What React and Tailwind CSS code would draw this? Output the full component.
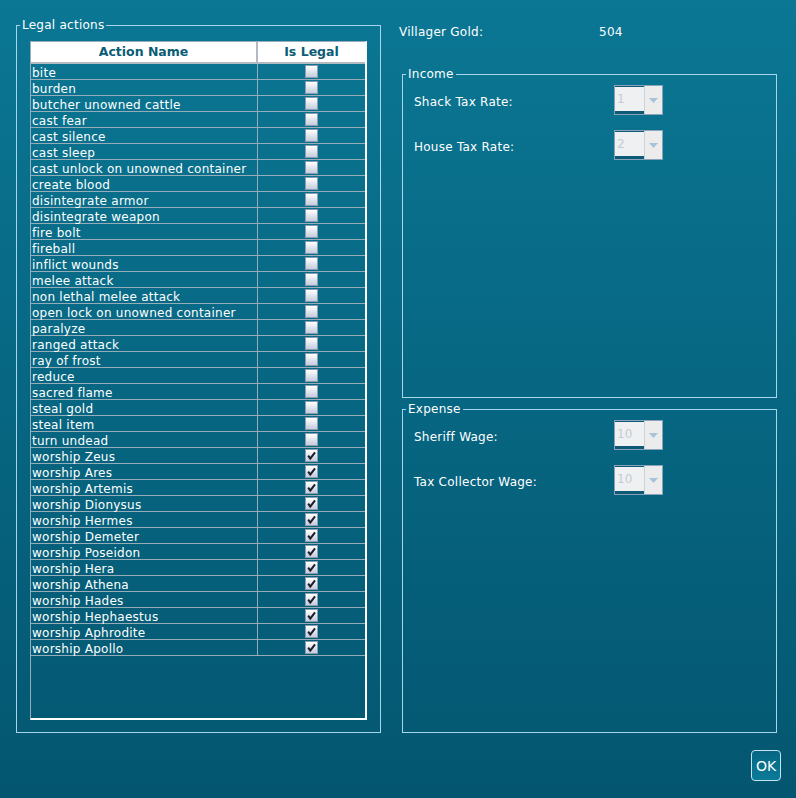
import React from "react";

const actions = [
  "bite", "burden", "butcher unowned cattle", "cast fear", "cast silence", "cast sleep",
  "cast unlock on unowned container", "create blood", "disintegrate armor", "disintegrate weapon",
  "fire bolt", "fireball", "inflict wounds", "melee attack", "non lethal melee attack",
  "open lock on unowned container", "paralyze", "ranged attack", "ray of frost", "reduce",
  "sacred flame", "steal gold", "steal item", "turn undead",
  "worship Zeus", "worship Ares", "worship Artemis", "worship Dionysus", "worship Hermes",
  "worship Demeter", "worship Poseidon", "worship Hera", "worship Athena", "worship Hades",
  "worship Hephaestus", "worship Aphrodite", "worship Apollo",
];

function Checkbox({ checked }) {
  return (
    <div className="w-[13px] h-[13px] border border-[#8d9cae] bg-linear-to-b from-white to-[#c4cddd] flex items-center justify-center">
      {checked && (
        <svg width="9" height="9" viewBox="0 0 9 9">
          <path d="M1.2 4.6 L3.3 7.6 L8 1.4" stroke="#1b1b2c" strokeWidth="2" fill="none" strokeLinejoin="miter" />
        </svg>
      )}
    </div>
  );
}

function Combo({ value }) {
  return (
    <div className="flex w-[49px] h-[30px] border border-[#8aa3b8]">
      <div className="w-[29px] bg-[#eef0f1] border-t border-t-[#0d5a78] border-b-[3px] border-b-[#0d5a78] text-[#c3ccd5] text-[12px] leading-none pl-[2px] flex items-center">
        {value}
      </div>
      <div className="flex-1 bg-[#ececec] border-l border-[#c9d2da] flex items-center justify-center">
        <svg width="9" height="5" viewBox="0 0 9 5">
          <path d="M0 0 L9 0 L4.5 5 Z" fill="#a8c2da" />
        </svg>
      </div>
    </div>
  );
}

function Row({ label, value }) {
  return (
    <div className="flex items-center h-[30px]">
      <div className="w-[200px] text-white text-[12px] tracking-[0.25px] pt-[3px]">{label}</div>
      <Combo value={value} />
    </div>
  );
}

export default function App() {
  return (
    <div className="w-[796px] h-[798px] bg-linear-to-b from-[#0b7794] to-[#045670] font-['DejaVu_Sans',sans-serif] text-[12px] leading-[16px] text-white flex flex-col">
      <div className="flex pt-[17px] pl-[16px]">
        <fieldset className="w-[365px] h-[716px] border border-[#a7d6ec] m-0 p-0">
          <legend className="ml-[3px] px-[2px] text-[12px] leading-[17px] tracking-[0.25px] text-white">Legal actions</legend>
          <div className="ml-[13px] mt-[7px] w-[337px] h-[679px] border-l border-t border-[#98abb8] border-r-2 border-b-2 border-r-white border-b-white flex flex-col">
            <div className="flex h-[22px] bg-white text-[#0b5d76] font-bold text-[12.5px]">
              <div className="w-[227px] border-r-2 border-b-2 border-[#b3bac1] flex items-center justify-center">Action Name</div>
              <div className="flex-1 border-b-2 border-[#b3bac1] flex items-center justify-center">Is Legal</div>
            </div>
            {actions.map((a) => (
              <div key={a} className="flex h-[16px] border-b border-[#98abb8]">
                <div className="w-[227px] border-r border-[#98abb8] pl-[1px] leading-[19px] tracking-[0.25px] whitespace-nowrap">{a}</div>
                <div className="flex-1 flex items-center justify-center">
                  <Checkbox checked={a.startsWith("worship")} />
                </div>
              </div>
            ))}
          </div>
        </fieldset>

        <div className="ml-[21px] w-[375px] flex flex-col pt-[7px]">
          <div className="flex h-[16px] ml-[-3px] tracking-[0.25px]">
            <div className="w-[200px]">Villager Gold:</div>
            <div>504</div>
          </div>

          <fieldset className="mt-[26px] h-[332px] border border-[#a7d6ec] m-0 p-0">
            <legend className="ml-[3px] px-[2px] text-[12px] leading-[17px] tracking-[0.25px]">Income</legend>
            <div className="pl-[11px] pt-[2px] flex flex-col gap-[15px]">
              <Row label="Shack Tax Rate:" value="1" />
              <Row label="House Tax Rate:" value="2" />
            </div>
          </fieldset>

          <fieldset className="mt-[3px] h-[332px] border border-[#a7d6ec] m-0 p-0">
            <legend className="ml-[3px] px-[2px] text-[12px] leading-[17px] tracking-[0.25px]">Expense</legend>
            <div className="pl-[11px] pt-[2px] flex flex-col gap-[15px]">
              <Row label="Sheriff Wage:" value="10" />
              <Row label="Tax Collector Wage:" value="10" />
            </div>
          </fieldset>
        </div>
      </div>

      <div className="flex justify-end pr-[15px] mt-[17px]">
        <button className="w-[30px] h-[31px] rounded-[4px] border border-[#c4e4f2] bg-linear-to-b from-[#066682] to-[#0b7b99] text-white text-[14px] flex items-center justify-center">
          OK
        </button>
      </div>
    </div>
  );
}
